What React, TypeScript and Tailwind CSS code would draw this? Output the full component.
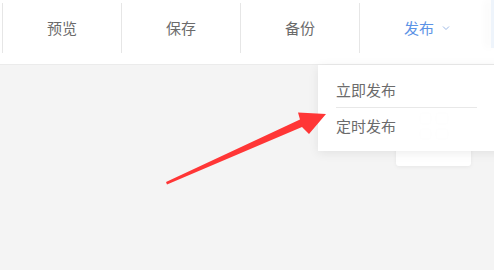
import React from "react";

const tabs = ["预览", "保存", "备份"];

export default function App() {
  return (
    <div
      className="relative w-[494px] h-[270px] overflow-hidden bg-[#f4f4f4]"
      style={{ fontFamily: '"Noto Sans CJK SC", "Noto Sans", sans-serif' }}
    >
      <div className="h-[65px] bg-white border-b border-[#ebebeb] pt-[3px]">
        <div className="flex ml-[2px]">
          {tabs.map((t) => (
            <div
              key={t}
              className="w-[119px] h-[50px] border-l border-[#e6e6e6] flex items-center justify-center text-[15px] text-[#6b6b6b]"
            >
              {t}
            </div>
          ))}
          <div className="w-[119px] h-[50px] border-l border-[#e6e6e6] flex items-center justify-center text-[15px] text-[#5b93e6]">
            <span className="relative">
              发布
              <svg
                className="absolute left-full top-1/2 -translate-y-1/2 ml-[8px]"
                width="8"
                height="6"
                viewBox="0 0 8 6"
                fill="none"
              >
                <path d="M1 1.5l3 3 3-3" stroke="#9bb8e6" strokeWidth="1" />
              </svg>
            </span>
          </div>
        </div>
      </div>

      {/* sliver of panel at the right edge */}
      <div className="absolute top-0 right-0 w-[3px] h-[48px] bg-[#eef4fb] shadow-[-4px_0_8px_rgba(0,0,0,0.06)]" />

      {/* card behind the menu */}
      <div className="absolute left-[396px] top-[100px] w-[75px] h-[66px] rounded-[3px] bg-white shadow-[0_1px_4px_rgba(0,0,0,0.06)] flex justify-center pt-[12px]">
        <div className="grid grid-cols-2 gap-[3px] w-[30px] h-[28px]">
          <div className="rounded-[4px] border-2 border-[#e2e2e2]" />
          <div className="rounded-[4px] border-2 border-[#e2e2e2]" />
          <div className="rounded-[4px] border-2 border-[#e2e2e2]" />
          <div className="rounded-[4px] border-2 border-[#e2e2e2]" />
        </div>
      </div>

      {/* dropdown */}
      <div className="absolute left-[318px] top-[65px] w-[190px] h-[86px] bg-white/[0.97] shadow-[0_2px_10px_rgba(0,0,0,0.08)] pl-[18px] pr-[31px] text-[15px] text-[#6b6b6b]">
        <div className="h-[42px] flex items-center pt-[9px]">立即发布</div>
        <div className="border-t border-[#e8e8e8]" />
        <div className="h-[36px] flex items-center">定时发布</div>
      </div>

      <svg className="absolute left-0 top-0" width="494" height="270" viewBox="0 0 494 270">
        <polygon
          points="167,184.5 302,127 309,134 326,114 298,112.5 300,119.5 166,182"
          fill="#ff3636"
        />
      </svg>
    </div>
  );
}
